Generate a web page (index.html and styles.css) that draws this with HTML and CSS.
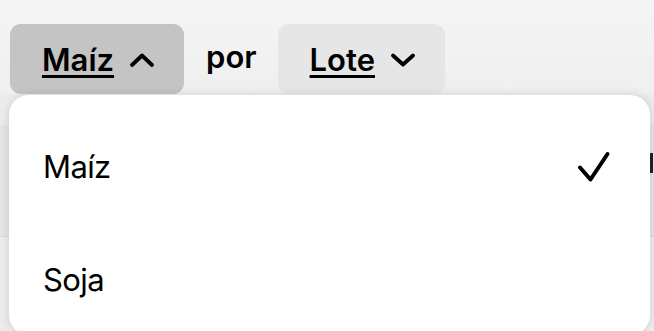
FILE: index.html
```html
<!DOCTYPE html>
<html lang="es">
<head>
<meta charset="utf-8">
<link rel="stylesheet" href="styles.css">
</head>
<body>
<div class="screen">
  <div class="toolbar">
    <button class="pill pill-active">
      <span class="pill-label">Maíz</span>
      <svg class="chev" width="26" height="16" viewBox="0 0 26 16"><path d="M3 13 L13 3.5 L23 13" fill="none" stroke="#000" stroke-width="3.8" stroke-linecap="round" stroke-linejoin="round"/></svg>
    </button>
    <span class="por">por</span>
    <button class="pill">
      <span class="pill-label">Lote</span>
      <svg class="chev" width="26" height="16" viewBox="0 0 26 16"><path d="M3 3.5 L13 12.5 L23 3.5" fill="none" stroke="#000" stroke-width="3.8" stroke-linecap="round" stroke-linejoin="round"/></svg>
    </button>
  </div>
  <div class="rows">
    <div class="row row-top"></div>
    <div class="row row-main"><span class="row-mark"></span></div>
    <div class="row row-bottom"></div>
  </div>

  <div class="menu">
    <div class="menu-item">
      <span>Maíz</span>
      <svg class="check" width="36" height="32" viewBox="0 0 36 32"><path d="M4 16.5 L14.5 28.5 L31.5 3" fill="none" stroke="#000" stroke-width="4" stroke-linecap="round" stroke-linejoin="round"/></svg>
    </div>
    <div class="menu-item">
      <span>Soja</span>
    </div>
  </div>
</div>
</body>
</html>
```

FILE: styles.css
```css
* { box-sizing: border-box; }
html, body {
  margin: 0;
  padding: 0;
}
body {
  width: 654px;
  height: 331px;
  overflow: hidden;
  background: #ececec;
  font-family: Inter, "Noto Sans", sans-serif;
  color: #000;
}
.screen {
  position: relative;
  width: 654px;
  height: 331px;
}
.toolbar {
  height: 95px;
  display: flex;
  align-items: flex-start;
  padding: 24px 0 0 10px;
  background: linear-gradient(#f5f5f5, #efefef);
}
.pill {
  height: 70px;
  display: flex;
  align-items: center;
  gap: 15px;
  padding: 0 29px 0 32px;
  border: none;
  border-radius: 11px;
  background: #e6e6e6;
  font-family: inherit;
  font-size: 31px;
  font-weight: 600;
  color: #000;
}
.pill-active {
  background: #c4c4c4;
}
.pill-label {
  text-decoration: underline;
  text-decoration-thickness: 2.5px;
  text-underline-offset: 4px;
  line-height: 1;
  padding-top: 1px;
}
.chev { display: block; margin-top: 2px; }
.por {
  height: 70px;
  display: flex;
  align-items: center;
  margin: 0 21px 0 22px;
  font-size: 31px;
  font-weight: 600;
  padding-bottom: 6px;
}
.rows {
  display: flex;
  flex-direction: column;
}
.row-top {
  height: 30px;
  background: #ebebeb;
}
.row-main {
  height: 112px;
  background: #e4e4e4;
  border-bottom: 1px solid #d8d8d8;
  display: flex;
  justify-content: flex-end;
  align-items: flex-start;
  padding: 28px 1px 0 0;
}
.row-mark {
  width: 3px;
  height: 20px;
  background: #222;
}
.row-bottom {
  height: 100px;
  background: #ececec;
}
.menu {
  position: absolute;
  left: 9px;
  top: 95px;
  width: 641px;
  height: 240px;
  background: #fff;
  border-radius: 20px;
  box-shadow: 0 0 10px rgba(0,0,0,0.12);
  padding-top: 15px;
}
.menu-item {
  height: 113px;
  display: flex;
  align-items: center;
  justify-content: space-between;
  padding: 0 38px 0 34px;
  font-size: 31px;
  font-weight: 400;
  letter-spacing: -0.6px;
}
.check { display: block; }
```
